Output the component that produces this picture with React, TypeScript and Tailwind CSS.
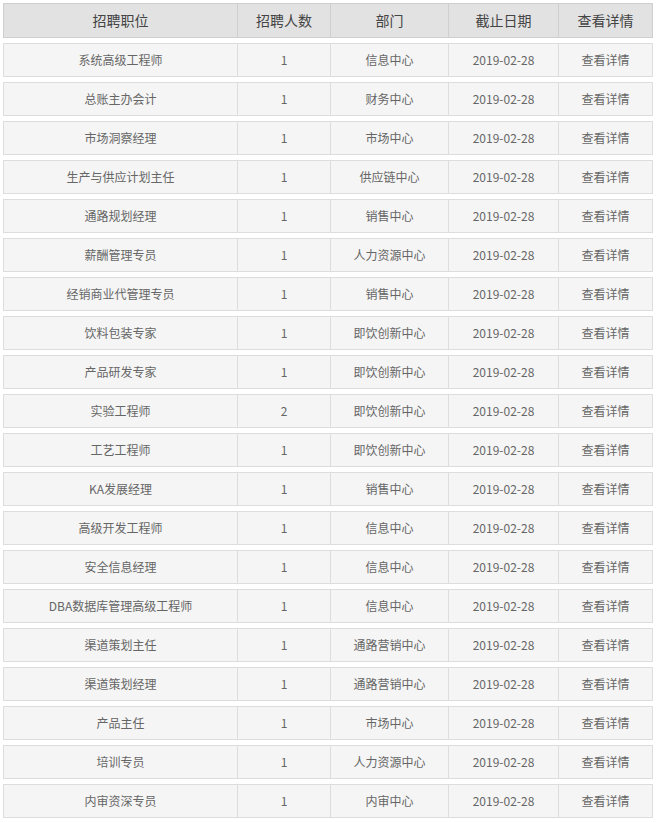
import React from "react";

const rows: [string, string, string][] = [
  ["系统高级工程师", "1", "信息中心"],
  ["总账主办会计", "1", "财务中心"],
  ["市场洞察经理", "1", "市场中心"],
  ["生产与供应计划主任", "1", "供应链中心"],
  ["通路规划经理", "1", "销售中心"],
  ["薪酬管理专员", "1", "人力资源中心"],
  ["经销商业代管理专员", "1", "销售中心"],
  ["饮料包装专家", "1", "即饮创新中心"],
  ["产品研发专家", "1", "即饮创新中心"],
  ["实验工程师", "2", "即饮创新中心"],
  ["工艺工程师", "1", "即饮创新中心"],
  ["KA发展经理", "1", "销售中心"],
  ["高级开发工程师", "1", "信息中心"],
  ["安全信息经理", "1", "信息中心"],
  ["DBA数据库管理高级工程师", "1", "信息中心"],
  ["渠道策划主任", "1", "通路营销中心"],
  ["渠道策划经理", "1", "通路营销中心"],
  ["产品主任", "1", "市场中心"],
  ["培训专员", "1", "人力资源中心"],
  ["内审资深专员", "1", "内审中心"],
];

const font = {
  fontFamily: '"Noto Sans CJK SC", "Liberation Sans", sans-serif',
};

export default function App() {
  return (
    <div className="bg-white w-[656px] min-h-[822px] pt-[3px] px-[3px]" style={font}>
      <div className="grid grid-cols-[234px_93px_118px_110px_95px] h-[35px] bg-[#e2e2e2] text-[14px] text-[#444]">
        {["招聘职位", "招聘人数", "部门", "截止日期", "查看详情"].map((h, i) => (
          <div
            key={h}
            className={`flex items-center justify-center border-y border-l border-[#cfcfcf] ${i === 4 ? "border-r" : ""}`}
          >
            {h}
          </div>
        ))}
      </div>
      <div className="flex flex-col gap-[5px] mt-[5px]">
        {rows.map(([a, b, c], idx) => (
          <div
            key={idx}
            className="grid grid-cols-[234px_93px_118px_110px_95px] h-[34px] bg-[#f5f5f5] text-[12px] text-[#666]"
          >
            <div className="flex items-center justify-center border-y border-l border-[#dddddd]">{a}</div>
            <div className="flex items-center justify-center border-y border-l border-[#dddddd]">{b}</div>
            <div className="flex items-center justify-center border-y border-l border-[#dddddd]">{c}</div>
            <div className="flex items-center justify-center border-y border-l border-[#dddddd]">2019-02-28</div>
            <div className="flex items-center justify-center border-y border-x border-[#dddddd]">查看详情</div>
          </div>
        ))}
      </div>
    </div>
  );
}
